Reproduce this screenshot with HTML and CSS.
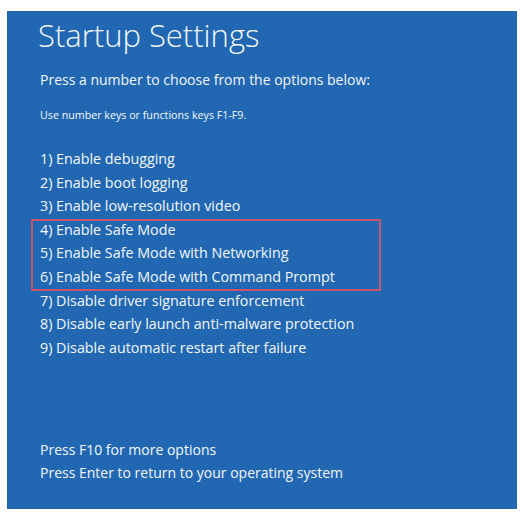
FILE: index.html
```html
<!DOCTYPE html>
<html>
<head>
<meta charset="utf-8">
<link rel="stylesheet" href="styles.css">
</head>
<body>
<div class="screen">
  <h1 class="title">Startup Settings</h1>
  <p class="lead">Press a number to choose from the options below:</p>
  <p class="hint">Use number keys or functions keys F1-F9.</p>
  <ul class="options">
    <li>1) Enable debugging</li>
    <li>2) Enable boot logging</li>
    <li>3) Enable low-resolution video</li>
    <li class="group">
      <ul class="boxed">
        <li>4) Enable Safe Mode</li>
        <li>5) Enable Safe Mode with Networking</li>
        <li>6) Enable Safe Mode with Command Prompt</li>
      </ul>
    </li>
    <li>7) Disable driver signature enforcement</li>
    <li>8) Disable early launch anti-malware protection</li>
    <li>9) Disable automatic restart after failure</li>
  </ul>
  <div class="footer">
    <p>Press F10 for more options</p>
    <p>Press Enter to return to your operating system</p>
  </div>
</div>
</body>
</html>
```

FILE: styles.css
```css
html, body {
  margin: 0;
  padding: 0;
  background: #ffffff;
}
body {
  width: 526px;
  height: 523px;
  font-family: "Open Sans", "Noto Sans", sans-serif;
}
.screen {
  box-sizing: border-box;
  margin: 11px 0 0 7px;
  width: 510px;
  height: 498px;
  background: #2167b2;
  color: #f4f7fb;
  padding: 4px 0 0 33px;
  display: flex;
  flex-direction: column;
}
.title {
  margin: 0 0 0 -2px;
  font-weight: 300;
  font-size: 31px;
  line-height: 40px;
}
.lead {
  margin: 15px 0 0 0;
  font-size: 14px;
  line-height: 20px;
}
.hint {
  margin: 18px 0 0 0;
  font-size: 10.7px;
  line-height: 15px;
}
.options {
  list-style: none;
  margin: 24px 0 0 0;
  padding: 0;
  font-size: 14.3px;
  line-height: 23.6px;
}
.boxed {
  list-style: none;
  margin: 0;
  padding: 0;
  position: relative;
}
.boxed::before {
  content: "";
  position: absolute;
  left: -9px;
  top: 1px;
  bottom: -2px;
  width: 350px;
  border: 2px solid #c9566c;
  box-sizing: border-box;
}
.footer {
  margin-top: auto;
  margin-bottom: 25px;
  font-size: 14px;
  line-height: 23px;
}
.footer p {
  margin: 0;
}
```
